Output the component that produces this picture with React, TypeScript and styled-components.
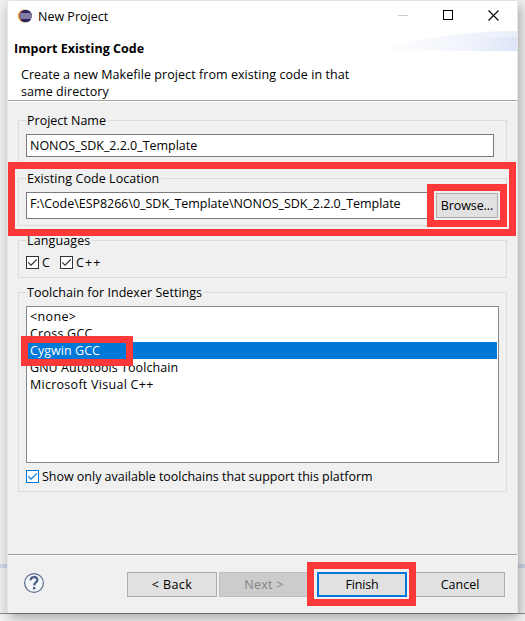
import React from "react";
import styled, { createGlobalStyle } from "styled-components";

const GlobalStyle = createGlobalStyle`
  * { box-sizing: border-box; }
  body {
    margin: 0;
    background: #f0f0f0;
    color: #000;
    font: 12.5px/17px "Open Sans", "Noto Sans", sans-serif;
    overflow: hidden;
  }
`;

const Desktop = styled.div`
  position: relative;
  width: 525px;
  height: 621px;
  padding: 1px 7px 0;
  overflow: hidden;
  background: linear-gradient(#f0f0f0 0 564px, #d2d8ea 564px 568px, #f0f0f0 568px 613px, #8c8c8c 613px 614px, #f5f5f5 614px);
`;

const Dialog = styled.main`
  display: flex;
  flex-direction: column;
  width: 511px;
  height: 612px;
  background: #f0f0f0;
  border: solid #e6e6e6;
  border-width: 0 1px;
  box-shadow: 2px 5px 12px rgba(0, 0, 0, 0.32);
`;

const Label = styled.span<{ $spacing?: number }>`
  white-space: pre;
  letter-spacing: ${(p) => p.$spacing ?? 0}px;
`;

const TitleBar = styled.header`
  display: flex;
  align-items: center;
  height: 30px;
  padding: 0 18px 0 10px;
  gap: 6px;
  background: #fff;
`;

const WindowButtons = styled.div`
  display: flex;
  align-items: center;
  gap: 35px;
  margin: -2px 0 0 auto;
`;

const Banner = styled.section`
  position: relative;
  height: 70px;
  padding: 9px 6px 0;
  background: #fff;
  border-bottom: 1px solid #a0a0a0;
  box-shadow: 0 1px #fff;
`;

const Wave = styled.svg`
  position: absolute;
  right: 0;
  top: 0;
`;

const Heading = styled.h1`
  position: relative;
  margin: 0;
  font-size: 12.5px;
  line-height: 18px;
  letter-spacing: 0.04px;
`;

const Description = styled.p`
  position: relative;
  margin: 8px 0 0 7px;
  line-height: 17px;
  letter-spacing: 0.06px;
  white-space: pre;
`;

const Content = styled.div`
  display: flex;
  flex-direction: column;
  flex: 1;
  padding: 19px 10px 0;
`;

const Group = styled.section<{ $height: number; $gap?: number }>`
  flex: none;
  height: ${(p) => p.$height}px;
  margin-bottom: ${(p) => p.$gap ?? 0}px;
  padding: 0 7px;
  border: 1px solid #dcdcdc;
`;

const Legend = styled.h2<{ $spacing?: number }>`
  width: fit-content;
  height: 17px;
  margin: -9px 0 0;
  padding: 0 2px 0 1px;
  font: inherit;
  white-space: pre;
  letter-spacing: ${(p) => p.$spacing ?? 0}px;
  background: #f0f0f0;
`;

const FieldRow = styled.div`
  display: flex;
  align-items: center;
  gap: 8px;
  margin-top: 5px;
`;

const Field = styled.div<{ $width: number; $height: number }>`
  width: ${(p) => p.$width}px;
  height: ${(p) => p.$height}px;
  padding: 2px 3px;
  border: 1px solid #7a7a7a;
  background: #fff;
`;

const Button = styled.button<{ $width?: number; $kind?: "default" | "disabled" }>`
  display: flex;
  align-items: center;
  justify-content: center;
  width: ${(p) => p.$width ?? 90}px;
  height: 25px;
  padding: 0 0 1px;
  font: inherit;
  color: ${(p) => (p.$kind === "disabled" ? "#838383" : "#000")};
  background: ${(p) => (p.$kind === "disabled" ? "#ccc" : "#e1e1e1")};
  border: ${(p) => (p.$kind === "default" ? "2px solid #0078d7" : p.$kind === "disabled" ? "1px solid #bfbfbf" : "1px solid #adadad")};
`;

const CheckRow = styled.div<{ $top: number }>`
  display: flex;
  gap: 10px;
  margin-top: ${(p) => p.$top}px;
`;

const CheckLabel = styled.label`
  display: flex;
  align-items: center;
  gap: 3px;
  height: 17px;
`;

const List = styled.ul`
  width: 473px;
  height: 157px;
  margin: 5px 0 0;
  padding: 1px;
  list-style: none;
  background: #fff;
  border: 1px solid #828790;
`;

const Option = styled.li<{ $selected?: boolean; $spacing: number }>`
  height: 17px;
  padding-left: 2px;
  line-height: 17px;
  white-space: pre;
  letter-spacing: ${(p) => p.$spacing}px;
  color: ${(p) => (p.$selected ? "#fff" : "#000")};
  background: ${(p) => (p.$selected ? "#0078d7" : "#fff")};
`;

const Footer = styled.footer`
  display: flex;
  height: 59px;
  padding: 17px 12px 0 15px;
  border-top: 1px solid #a0a0a0;
  box-shadow: inset 0 1px #fff;
`;

const Actions = styled.div`
  display: flex;
  margin-left: auto;
  gap: 8px;
`;

const StepButtons = styled.div`
  display: flex;
  gap: 2px;
`;

const Highlight = styled.div<{ $x: number; $y: number; $w: number; $h: number }>`
  position: absolute;
  left: ${(p) => p.$x}px;
  top: ${(p) => p.$y}px;
  width: ${(p) => p.$w}px;
  height: ${(p) => p.$h}px;
  border: 7px solid #fd3838;
  pointer-events: none;
`;

const EclipseIcon = () => (
  <svg width="14" height="14" viewBox="0 0 14 14">
    <circle cx="6.4" cy="7" r="6.4" fill="#f5962a" />
    <circle cx="7.7" cy="7" r="6.3" fill="#2f2563" />
    <path d="M2.2 5H13.4M1.8 7H13.8M2.2 9H13.4" stroke="#e9e7f2" strokeWidth="0.9" />
  </svg>
);

const CheckBox = ({ active = false }: { active?: boolean }) => (
  <svg width="13" height="13" viewBox="0 0 13 13">
    <rect x="0.5" y="0.5" width="12" height="12" fill="#fff" stroke={active ? "#0078d7" : "#333"} />
    <path d="M2.2 6.4 5 9.2 10.9 3.3" fill="none" stroke={active ? "#0078d7" : "#333"} strokeWidth="1.2" />
  </svg>
);

const HelpIcon = () => (
  <svg width="22" height="22" viewBox="0 0 22 22">
    <circle cx="11" cy="11" r="9.4" fill="#f4f5f8" stroke="#5b6b8d" strokeWidth="1.2" />
    <path d="M7.6 8.2C7.7 4 14.5 4 14.4 8 14.3 10.5 11.2 10.5 11.2 13.4" fill="none" stroke="#4f6187" strokeWidth="2.3" />
    <rect x="9.9" y="15" width="2.5" height="2.4" fill="#4f6187" />
  </svg>
);

const toolchains = [
  { name: "<none>", spacing: 0.35 },
  { name: "Cross GCC", spacing: 0.24 },
  { name: "Cygwin GCC", spacing: 0.05 },
  { name: "GNU Autotools Toolchain", spacing: 0.06 },
  { name: "Microsoft Visual C++", spacing: 0.27 },
];

export default function App() {
  return (
    <>
      <GlobalStyle />
      <Desktop>
        <Dialog>
          <TitleBar>
            <EclipseIcon />
            <Label>New Project</Label>
            <WindowButtons>
              <svg width="10" height="10"><path d="M0 5.5H10" stroke="#ccc" /></svg>
              <svg width="10" height="10"><rect x=".5" y=".5" width="9" height="9" fill="none" stroke="#000" /></svg>
              <svg width="11" height="11"><path d="M.5 .5 10.5 10.5M10.5 .5 .5 10.5" stroke="#000" strokeWidth="1.1" /></svg>
            </WindowButtons>
          </TitleBar>
          <Banner>
            <Wave width="140" height="20" viewBox="0 0 140 20">
              <defs>
                <linearGradient id="outer"><stop offset="0" stopColor="#fff" /><stop offset="1" stopColor="#e9eefa" /></linearGradient>
                <linearGradient id="inner"><stop offset="0" stopColor="#fff" stopOpacity="0" /><stop offset="1" stopColor="#dce4f7" /></linearGradient>
              </defs>
              <path d="M0 20C40 8 90 0 140 0V20Z" fill="url(#outer)" />
              <path d="M40 20C70 10 110 6 140 6V20Z" fill="url(#inner)" />
            </Wave>
            <Heading>Import Existing Code</Heading>
            <Description>{"Create a new Makefile project from existing code in that\nsame directory"}</Description>
          </Banner>
          <Content>
            <Group $height={44} $gap={14}>
              <Legend>Project Name</Legend>
              <FieldRow>
                <Field $width={468} $height={23}><Label $spacing={-0.03}>NONOS_SDK_2.2.0_Template</Label></Field>
              </FieldRow>
            </Group>
            <Group $height={48} $gap={14}>
              <Legend $spacing={0.06}>Existing Code Location</Legend>
              <FieldRow>
                <Field $width={402} $height={27}><Label $spacing={-0.03}>{"F:\\Code\\ESP8266\\0_SDK_Template\\NONOS_SDK_2.2.0_Template"}</Label></Field>
                <Button $width={62}><Label $spacing={-0.1}>Browse...</Label></Button>
              </FieldRow>
            </Group>
            <Group $height={38} $gap={14}>
              <Legend $spacing={0.12}>Languages</Legend>
              <CheckRow $top={5}>
                <CheckLabel><CheckBox /><Label>C</Label></CheckLabel>
                <CheckLabel><CheckBox /><Label $spacing={1.2}>C++</Label></CheckLabel>
              </CheckRow>
            </Group>
            <Group $height={200}>
              <Legend $spacing={0.04}>Toolchain for Indexer Settings</Legend>
              <List>
                {toolchains.map(({ name, spacing }) => (
                  <Option key={name} $spacing={spacing} $selected={name === "Cygwin GCC"}>{name}</Option>
                ))}
              </List>
              <CheckRow $top={5}>
                <CheckLabel><CheckBox active /><Label $spacing={-0.02}>Show only available toolchains that support this platform</Label></CheckLabel>
              </CheckRow>
            </Group>
          </Content>
          <Footer>
            <HelpIcon />
            <Actions>
              <StepButtons>
                <Button><Label $spacing={0.4}>{"< Back"}</Label></Button>
                <Button $kind="disabled"><Label $spacing={0.3}>{"Next >"}</Label></Button>
              </StepButtons>
              <Button $kind="default"><Label $spacing={-0.15}>Finish</Label></Button>
              <Button><Label>Cancel</Label></Button>
            </Actions>
          </Footer>
        </Dialog>
        <Highlight $x={8} $y={162} $w={508} $h={74} />
        <Highlight $x={427} $y={184} $w={80} $h={43} />
        <Highlight $x={21} $y={336} $w={112} $h={30} />
        <Highlight $x={307} $y={562} $w={109} $h={44} />
      </Desktop>
    </>
  );
}
